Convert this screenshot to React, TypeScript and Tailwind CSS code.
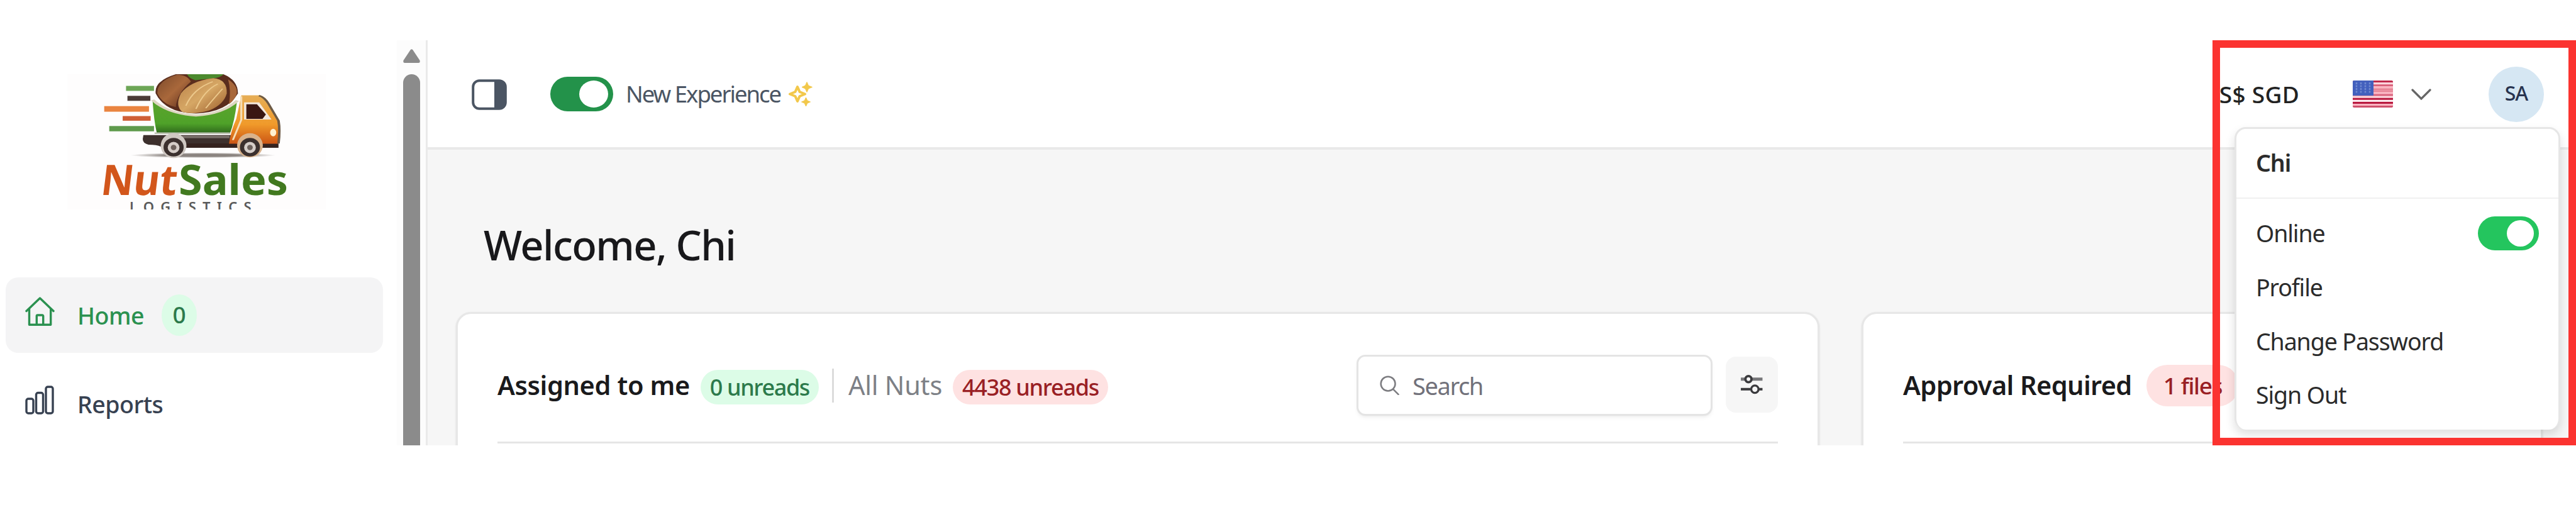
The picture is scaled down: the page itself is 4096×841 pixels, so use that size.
import React from 'react';

interface NavItem {
  label: string;
  icon: React.ReactNode;
  count?: number;
  active?: boolean;
}

function Logo() {
  return (
    <svg width="411" height="215" viewBox="0 0 411 215" className="block bg-[#fefdfd]">
      <defs>
        <linearGradient id="bucket" x1="0" y1="0" x2="0" y2="1">
          <stop offset="0.3" stopColor="#56a32b" />
          <stop offset="0.7" stopColor="#4fa229" />
          <stop offset="1" stopColor="#2f6a1c" />
        </linearGradient>
        <linearGradient id="cab" x1="0" y1="0" x2="0" y2="1">
          <stop offset="0" stopColor="#e6ae57" />
          <stop offset="0.6" stopColor="#f09a2a" />
          <stop offset="1" stopColor="#cc5514" />
        </linearGradient>
        <linearGradient id="almond" x1="0" y1="0" x2="1" y2="1">
          <stop offset="0" stopColor="#b98048" />
          <stop offset="0.5" stopColor="#d6a765" />
          <stop offset="1" stopColor="#9a5b2a" />
        </linearGradient>
        <linearGradient id="nut" x1="0" y1="0" x2="1" y2="1">
          <stop offset="0" stopColor="#7c4a2b" />
          <stop offset="0.5" stopColor="#a9683b" />
          <stop offset="1" stopColor="#5b2c1c" />
        </linearGradient>
        <radialGradient id="ground">
          <stop offset="0.5" stopColor="#8b8480" />
          <stop offset="1" stopColor="#fefdfd" />
        </radialGradient>
      </defs>

      <g transform="scale(.4448 .2473) translate(-240 -297)">
        <ellipse cx="725" cy="818" rx="260" ry="17" fill="url(#ground)" />
        {/* speed lines */}
        <rect x="450" y="372" width="100" height="32" fill="#6da656" />
        <rect x="455" y="436" width="82" height="32" fill="#4a3a36" />
        <rect x="372" y="502" width="160" height="36" fill="#ea8440" />
        <rect x="438" y="566" width="100" height="30" fill="#cf5f36" />
        <rect x="390" y="630" width="160" height="34" fill="#5f9a4c" />
        {/* chassis */}
        <path d="M512 688h330v80H580q-14-18-50-18-22-10-20-40z" fill="#3d302d" />
        <rect x="650" y="692" width="170" height="16" fill="#7a706a" />
        <rect x="650" y="742" width="345" height="28" fill="#35231f" />
        {/* bucket */}
        <path d="M545 470Q550 600 560 675H822Q838 600 846 480Q790 550 700 562Q600 552 545 470z" fill="url(#bucket)" />
        <path d="M552 676h270" stroke="#b9bfae" strokeWidth="10" />
        <path d="M628 297Q550 340 556 420Q590 545 700 550Q812 540 850 420Q850 335 798 297z" fill="#5a2d1d" />
        <path d="M632 300Q560 340 562 420Q580 490 628 508Q632 420 682 345Q668 300 632 300z" fill="url(#nut)" />
        <path d="M668 297h130q-8 22-38 26l-62 12q-22-10-30-38z" fill="#4c8a2e" />
        <path d="M815 330Q850 370 846 420Q840 460 818 490Q826 400 815 330z" fill="#a8673a" />
        <path d="M762 322Q680 340 646 420Q624 500 652 540Q690 560 748 530Q800 490 810 420Q812 330 762 322z" fill="url(#almond)" />
        <path d="M760 345Q690 390 664 500M778 360Q730 400 700 520M795 390Q770 440 735 515" fill="none" stroke="#edc98c" strokeWidth="5" />
        <path d="M545 462Q600 552 700 562Q796 552 848 466" fill="none" stroke="#ddd6c2" strokeWidth="13" />
        {/* cab */}
        <path d="M862 432h68q20 10 32 52l34 110q6 60-2 150H818q6-80 26-160z" fill="url(#cab)" />
        <path d="M925 434q20 10 34 52l36 110q6 60 0 146" fill="none" stroke="#6d5a46" strokeWidth="9" />
        <path d="M872 478h54l44 110h-98z" fill="#f3e8dc" />
        <path d="M880 490h38l32 66-12 28h-58z" fill="#3a1712" />
        <path d="M862 440v150l-30 130" fill="none" stroke="#f6ddb5" strokeWidth="7" />
        <ellipse cx="976" cy="672" rx="11" ry="24" fill="#fff1d0" />
        {/* wheels */}
        <ellipse cx="620" cy="756" rx="46" ry="80" fill="#cfc8c2" />
        <ellipse cx="893" cy="754" rx="46" ry="78" fill="#d9b28b" />
        <ellipse cx="620" cy="766" rx="36" ry="60" fill="#3b302e" />
        <ellipse cx="893" cy="766" rx="36" ry="60" fill="#3b302e" />
        <ellipse cx="620" cy="768" rx="21" ry="36" fill="#d5cdc8" />
        <ellipse cx="893" cy="768" rx="21" ry="36" fill="#d5cdc8" />
        <ellipse cx="620" cy="768" rx="10" ry="17" fill="#6d615c" />
        <ellipse cx="893" cy="768" rx="10" ry="17" fill="#6d615c" />
      </g>

      <text x="52" y="192" fontFamily="Noto Sans, sans-serif" fontWeight="700" fontSize="67" fill="#d2561b" textLength="121" lengthAdjust="spacingAndGlyphs" transform="skewX(-7) translate(23 0)">
        Nut
      </text>
      <text x="177" y="192" fontFamily="Noto Sans, sans-serif" fontWeight="700" fontSize="67" fill="#41791f" textLength="174" lengthAdjust="spacingAndGlyphs">
        Sales
      </text>
      <text x="99" y="219" fontFamily="Noto Sans, sans-serif" fontWeight="600" fontSize="22" letterSpacing="10.2" fill="#5a5a5a">
        LOGISTICS
      </text>
    </svg>
  );
}

function HomeIcon() {
  return (
    <svg width="47" height="46" viewBox="0 0 47 46" fill="none" stroke="currentColor" strokeWidth="3.4" strokeLinecap="round" strokeLinejoin="round">
      <path d="M2 22.5 23.5 2 45 22.5" />
      <path d="M6.5 19v25.3h34.2V19" />
      <path d="M18.3 44V30.5a1.5 1.5 0 0 1 1.5-1.5h7.4a1.5 1.5 0 0 1 1.5 1.5V44" />
    </svg>
  );
}

function ReportsIcon() {
  return (
    <svg width="47" height="46" viewBox="0 0 47 46" fill="none" stroke="currentColor" strokeWidth="3.4">
      <rect x="2" y="21" width="11" height="23" rx="3" />
      <rect x="17.5" y="11.5" width="11" height="32.5" rx="3" />
      <rect x="33" y="2" width="11" height="42" rx="3" />
    </svg>
  );
}

function PanelIcon() {
  return (
    <svg width="56" height="49" viewBox="0 0 56 49">
      <rect x="2.2" y="2.2" width="51.6" height="44.6" rx="10" fill="#fff" stroke="#4b5563" strokeWidth="4" />
      <path d="M36 1h9a10 10 0 0 1 10 10v27a10 10 0 0 1-10 10h-9z" fill="#4b5563" />
    </svg>
  );
}

function SparklesIcon() {
  return (
    <svg width="40" height="40" viewBox="0 0 40 39" fill="#f2c84b">
      <path d="M16 7.5 19.5 15.5 28 19 19.5 22.5 16 30.5 12.5 22.5 4 19 12.5 15.5z" fill="none" stroke="#f2c84b" strokeWidth="4" strokeLinejoin="round" />
      <path d="M31 0 33.5 5.5 39.5 8 33.5 10.5 31 16 28.5 10.5 23 8 28.5 5.5z" stroke="#f2c84b" strokeWidth="1" />
      <path d="M29.5 24.5 31.8 29.5 36.5 31.5 31.8 33.5 29.5 38.5 27.2 33.5 22.5 31.5 27.2 29.5z" stroke="#f2c84b" strokeWidth="1" />
    </svg>
  );
}

function SearchIcon() {
  return (
    <svg width="31" height="31" viewBox="0 0 32 32" fill="none" stroke="#7c7c80" strokeWidth="2.6" strokeLinecap="round">
      <circle cx="13.5" cy="13.5" r="11.8" />
      <path d="M22 22.5 30.5 31" />
    </svg>
  );
}

function SlidersIcon() {
  return (
    <svg width="35" height="32" viewBox="0 0 36 33" fill="none" stroke="#3a3a3d">
      <path d="M0 8h6.5M18 8h17.5" strokeWidth="5" stroke="#77777a" />
      <circle cx="12.5" cy="8" r="5" strokeWidth="4" />
      <path d="M0 24.5h15.5M30 24.5h5.5" strokeWidth="4" />
      <circle cx="23" cy="24.5" r="6" strokeWidth="3.4" />
    </svg>
  );
}

function FlagIcon() {
  const stripes = ['#c02a4c', '#fdd5dc', '#d9607a', '#fbb4c1', '#e88496', '#e88496', '#fbb4c1', '#d9607a', '#fdd5dc', '#b8173d', '#fff1f3', '#b8173d', '#fbb4c1', '#cf4f6a'];
  return (
    <svg width="64" height="43" viewBox="0 0 64 43" className="block">
      <clipPath id="flag">
        <rect width="64" height="43" rx="2" />
      </clipPath>
      <g clipPath="url(#flag)">
        {stripes.map((color, i) => (
          <rect key={i} y={i * 3.08} width="64" height="3.2" fill={color} />
        ))}
        <rect width="33" height="24" fill="#4360bd" />
        <path d="M6 3v18M13 3v18M20 3v18M27 3v18" stroke="#6f88d0" strokeWidth="2.5" strokeDasharray="3 1.5" />
      </g>
    </svg>
  );
}

const navItems: NavItem[] = [
  { label: 'Home', icon: <HomeIcon />, count: 0, active: true },
  { label: 'Reports', icon: <ReportsIcon /> },
];

function Sidebar() {
  return (
    <aside className="flex h-full w-[680px] shrink-0 border-r-[3px] border-[#eaeaea] bg-white">
      <div className="flex flex-1 flex-col pl-[9px]">
        <div className="ml-[98px] mt-[54px]">
          <Logo />
        </div>
        <nav className="mt-[108px] flex w-[600px] flex-col gap-[21px]">
          {navItems.map((item) => (
            <a
              key={item.label}
              className={`flex h-[120px] items-center rounded-[20px] pl-[31px] text-[37.5px] font-medium ${
                item.active ? 'bg-[#f4f4f5] text-[#2b9150]' : 'text-[#374151]'
              }`}
            >
              <span className="pb-[12px]">{item.icon}</span>
              <span className="ml-[36px] pt-[2px] tracking-[-0.5px]">{item.label}</span>
              {item.count !== undefined && (
                <span className="ml-[28px] flex h-[66px] w-[56px] items-center justify-center rounded-[50%] bg-[#dcfce7] pb-[3px] text-[37px] text-[#2c7a4b]">
                  {item.count}
                </span>
              )}
            </a>
          ))}
        </nav>
      </div>
      <div className="flex w-[46px] flex-col items-center bg-[#fcfcfc] pt-[14px]">
        <svg width="27" height="22" viewBox="0 0 27 22" fill="#8b8b8b">
          <path d="M11.5 1.5q2-2.5 4 0L26.5 18q1 4-2 4h-22q-3 0-2-4z" />
        </svg>
        <div className="mt-[18px] w-[27px] flex-1 rounded-t-[14px] bg-[#8b8b8b]" />
      </div>
    </aside>
  );
}

function Header() {
  return (
    <header className="flex h-[174px] shrink-0 items-center justify-between border-b-[4px] border-[#e9e9e9] bg-white pl-[70px] pr-[51px]">
      <div className="flex items-center">
        <span className="pt-[2px]">
          <PanelIcon />
        </span>
        <div className="ml-[69px] flex h-[55px] w-[100px] items-center justify-end rounded-full bg-[#23924a] pr-[8px]">
          <span className="h-[43px] w-[46px] rounded-[50%] bg-white" />
        </div>
        <span className="ml-[20px] pt-[1px] text-[36.5px] tracking-[-2px] text-[#4b5563]">New Experience</span>
        <span className="ml-[11px] pt-[1px]">
          <SparklesIcon />
        </span>
      </div>
      <div className="flex items-center pt-[1px]">
        <span className="text-[37px] font-medium tracking-[0.3px] text-[#222]">S$ SGD</span>
        <span className="ml-[85px] pb-[1px]">
          <FlagIcon />
        </span>
        <svg className="ml-[29px]" width="32" height="18" viewBox="0 0 32 18" fill="none" stroke="#666" strokeWidth="3.2" strokeLinecap="round">
          <path d="M2 2 16 16 30 2" />
        </svg>
        <span className="ml-[91px] flex h-[88px] w-[88px] items-center justify-center rounded-full bg-[#d6e7f3] pb-[3px] text-[32px] font-medium tracking-[-1px] text-[#28334f]">
          SA
        </span>
      </div>
    </header>
  );
}

function AssignedCard() {
  return (
    <section className="h-[300px] w-[2168px] shrink-0 rounded-[24px] border-[3px] border-[#e7e7e7] bg-white px-[63px] pt-[65px] shadow-sm">
      <div className="flex h-[97px] items-center justify-between">
        <div className="flex items-center whitespace-nowrap">
          <span className="text-[41.5px] font-semibold tracking-[-0.4px] text-[#1a1a1c]">Assigned to me</span>
          <span className="ml-[17px] mt-[6px] flex h-[55px] items-center rounded-full bg-[#dcfce7] px-[15px] text-[36px] font-medium tracking-[-1.4px] text-[#2c7a4b]">
            0 unreads
          </span>
          <span className="ml-[21px] h-[54px] w-[3px] bg-[#dcdcdc]" />
          <span className="ml-[23px] text-[41.5px] tracking-[-0.2px] text-[#7d8086]">All Nuts</span>
          <span className="ml-[17px] mt-[6px] flex h-[55px] items-center rounded-full bg-[#fee2e2] px-[15px] text-[36px] font-medium tracking-[-1.3px] text-[#992024]">
            4438 unreads
          </span>
        </div>
        <div className="flex items-center">
          <div className="flex h-[97px] w-[566px] items-center rounded-[14px] border-[3px] border-[#e4e4e4] bg-white pl-[34px] shadow-md shadow-black/5">
            <SearchIcon />
            <span className="ml-[21px] text-[38px] tracking-[-1.4px] text-[#71717a]">Search</span>
          </div>
          <div className="mb-[3px] ml-[21px] flex h-[89px] w-[83px] items-center justify-center rounded-[16px] bg-[#f6f6f6]">
            <SlidersIcon />
          </div>
        </div>
      </div>
      <div className="mt-[41px] h-[3px] bg-[#e5e5e5]" />
    </section>
  );
}

function ApprovalCard() {
  return (
    <section className="h-[300px] w-[1083px] shrink-0 rounded-[24px] border-[3px] border-[#e7e7e7] bg-white px-[63px] pt-[65px] shadow-sm">
      <div className="flex h-[97px] items-center whitespace-nowrap">
        <span className="text-[41.5px] font-semibold tracking-[-0.6px] text-[#1a1a1c]">Approval Required</span>
        <span className="ml-[23px] flex h-[66px] items-center rounded-full bg-[#fee2e2] px-[27px] text-[37px] font-medium tracking-[-1.4px] text-[#992024]">
          1 files
        </span>
      </div>
      <div className="mt-[41px] h-[3px] bg-[#e5e5e5]" />
    </section>
  );
}

function UserMenu() {
  const links = ['Profile', 'Change Password', 'Sign Out'];
  return (
    <div className="absolute left-[3553px] top-[138px] h-[481px] w-[518px] rounded-[18px] border-[3px] border-b-0 border-[#e6e6e6] bg-white text-[37.5px] tracking-[-1.1px] text-[#2b2b2b] shadow-[0_8px_16px_rgba(0,0,0,0.13)]">
      <div className="flex h-[111px] items-center border-b-2 border-[#f0f0f0] pb-[1px] pl-[31px] font-semibold">Chi</div>
      <div className="mt-[11px] flex h-[87px] items-center justify-between pl-[31px] pr-[31px]">
        <span>Online</span>
        <div className="flex h-[54px] w-[97px] items-center justify-end rounded-full bg-[#24c55e] pr-[8px]">
          <span className="h-[42px] w-[43px] rounded-[50%] bg-white" />
        </div>
      </div>
      {links.map((link) => (
        <div key={link} className="flex h-[85.5px] items-center pl-[31px]">
          {link}
        </div>
      ))}
    </div>
  );
}

export default function App() {
  return (
    <div className="h-[841px] w-[4096px] overflow-hidden bg-white pt-[64px] font-['Noto_Sans',sans-serif] leading-none">
      <div className="relative flex h-[644px] overflow-hidden">
        <Sidebar />
        <main className="flex flex-1 flex-col bg-[#f6f6f6]">
          <Header />
          <h1 className="ml-[89px] mt-[111px] text-[65px] font-medium leading-[80px] tracking-[-1.6px] text-[#18181b]">Welcome, Chi</h1>
          <div className="ml-[45px] mt-[67px] flex gap-[67px]">
            <AssignedCard />
            <ApprovalCard />
          </div>
        </main>
        <UserMenu />
        {/* highlight frame around the account area */}
        <div className="absolute bottom-0 right-0 h-[644px] w-[578px] border-[12.5px] border-[#fb3330]" />
      </div>
    </div>
  );
}
